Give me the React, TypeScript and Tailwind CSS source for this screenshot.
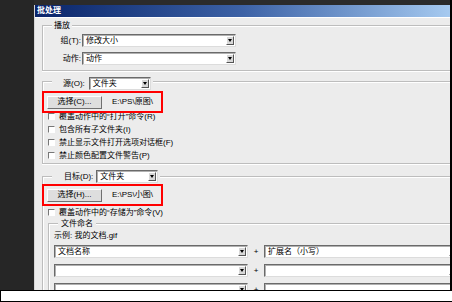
import React from 'react';

const bodyBg = 'bg-[#ececec]';

function Arrow() {
  return (
    <div className="w-[8px] h-[9px] shrink-0 bg-[#d8d8d8] border border-t-white border-l-white border-r-[#555] border-b-[#555] flex items-center justify-center">
      <div className="w-0 h-0 border-l-[2px] border-r-[2px] border-t-[3px] border-l-transparent border-r-transparent border-t-black" />
    </div>
  );
}

function Combo({ w, text }: { w: string; text?: string }) {
  return (
    <div
      className={`${w} h-[13px] shrink-0 bg-white border border-t-[#6a6a6a] border-l-[#6a6a6a] border-r-[#dcdcdc] border-b-[#dcdcdc] shadow-[inset_1px_1px_0_#b0b0b0] flex items-center justify-between pl-[3px] pr-[1px] leading-none`}
    >
      <span className="whitespace-nowrap">{text}</span>
      <Arrow />
    </div>
  );
}

function Check({ label }: { label: string }) {
  return (
    <div className="h-[13px] ml-[5px] flex items-center whitespace-nowrap">
      <div className="w-[7px] h-[7px] bg-white border border-t-[#777] border-l-[#777] border-r-white border-b-white" />
      <span className="ml-[4px]">{label}</span>
    </div>
  );
}

function PickRow({ btn, path }: { btn: string; path: string }) {
  return (
    <div className="relative z-10 -ml-[1px] w-[121px] h-[22px] border-2 border-[#ff0000] flex items-center pl-[3px]">
      <div className="w-[55px] h-[13px] bg-[#dedede] border border-t-white border-l-white border-r-[#707070] border-b-[#707070] flex items-center justify-center leading-none">
        {btn}
      </div>
      <span className="ml-[10px] whitespace-nowrap leading-none">{path}</span>
    </div>
  );
}

const groupBox =
  'w-[430px] shrink-0 border border-r-0 border-[#bdbdbd] shadow-[inset_1px_1px_0_#fff,0_1px_0_#fff] flex flex-col';

export default function App() {
  return (
    <div className="w-[452px] h-[302px] bg-[#262626] flex flex-col overflow-hidden text-[8px] text-black font-['Liberation_Sans','Noto_Sans_CJK_SC',sans-serif]">
      <div className="h-[290px] shrink-0 flex">
        <div className="w-[34px] shrink-0 bg-[#262626]" />
        <div className="flex-1 min-w-0 flex flex-col">
          <div className="h-[5px] shrink-0 bg-[#2b2b2b]" />
          <div className={`flex-1 min-h-0 ${bodyBg} border-l border-[#d6d6d6] overflow-hidden flex flex-col`}>
            <div className="h-[12px] shrink-0 bg-linear-to-r from-[#0a246a] via-[#3d62a6] to-[#a6caf0] text-white font-bold pl-[2px] flex items-center leading-none">
              批处理
            </div>
            <div className="h-[1px] bg-white shrink-0" />

            <div className="pl-[7px] flex flex-col">
              {/* 播放 */}
              <div className={`mt-[7px] ${groupBox} pb-[5px]`}>
                <div className={`-mt-[6px] ml-[9px] self-start px-[2px] h-[11px] leading-[11px] ${bodyBg}`}>播放</div>
                <div className="mt-[3px] flex items-center">
                  <span className="w-[38px] text-right">组(T):</span>
                  <div className="ml-[1px]">
                    <Combo w="w-[154px]" text="修改大小" />
                  </div>
                </div>
                <div className="mt-[5px] flex items-center">
                  <span className="w-[38px] text-right">动作:</span>
                  <div className="ml-[1px]">
                    <Combo w="w-[154px]" text="动作" />
                  </div>
                </div>
              </div>

              {/* 源 */}
              <div className={`mt-[10px] ${groupBox} pb-[1px]`}>
                <div className={`-mt-[5px] ml-[9px] self-start pl-[11px] pr-[2px] flex items-center ${bodyBg}`}>
                  <span>源(O):</span>
                  <div className="ml-[4px]">
                    <Combo w="w-[62px]" text="文件夹" />
                  </div>
                </div>
                <div className="mt-[1px] -mb-[3px]">
                  <PickRow btn="选择(C)..." path="E:\PS\原图\" />
                </div>
                <Check label="覆盖动作中的“打开”命令(R)" />
                <Check label="包含所有子文件夹(I)" />
                <Check label="禁止显示文件打开选项对话框(F)" />
                <Check label="禁止颜色配置文件警告(P)" />
              </div>

              {/* 目标 */}
              <div className={`mt-[12px] ${groupBox} border-b-0`}>
                <div className={`-mt-[7px] ml-[9px] self-start pl-[12px] pr-[2px] flex items-center ${bodyBg}`}>
                  <span>目标(D):</span>
                  <div className="ml-[3px]">
                    <Combo w="w-[62px]" text="文件夹" />
                  </div>
                </div>
                <div className="mt-[1px]">
                  <PickRow btn="选择(H)..." path="E:\PS\小图\" />
                </div>
                <Check label="覆盖动作中的“存储为”命令(V)" />

                <div className="mt-[4px] ml-[5px] w-[420px] border-l border-t border-[#bdbdbd] shadow-[inset_1px_1px_0_#fff] flex flex-col">
                  <div className={`-mt-[6px] ml-[9px] self-start px-[3px] h-[11px] leading-[11px] ${bodyBg}`}>文件命名</div>
                  <div className="mt-[1px] ml-[5px] h-[11px] leading-[11px]">示例: 我的文档.gif</div>
                  <div className="mt-[4px] ml-[5px] flex items-center">
                    <Combo w="w-[194px]" text="文档名称" />
                    <span className="w-[16px] text-center leading-none">+</span>
                    <Combo w="w-[195px]" text="扩展名（小写）" />
                  </div>
                  <div className="mt-[6px] ml-[5px] flex items-center">
                    <Combo w="w-[194px]" />
                    <span className="w-[16px] text-center leading-none">+</span>
                    <Combo w="w-[195px]" />
                  </div>
                  <div className="mt-[6px] ml-[5px] flex items-center">
                    <Combo w="w-[194px]" />
                    <span className="w-[16px] text-center leading-none">+</span>
                    <Combo w="w-[195px]" />
                  </div>
                </div>
              </div>
            </div>
          </div>
        </div>
        <div className="w-[2px] shrink-0 bg-black" />
      </div>
      <div className="h-[12px] shrink-0 bg-white border-t border-b border-l border-black" />
    </div>
  );
}
